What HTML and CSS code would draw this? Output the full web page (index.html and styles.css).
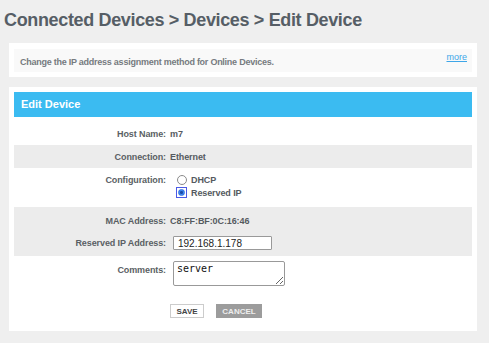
FILE: index.html
```html
<!DOCTYPE html>
<html lang="en">
<head>
    <meta charset="UTF-8">
    <link rel="stylesheet" href="styles.css">
</head>
<body>
    <h1 class="title">Connected Devices &gt; Devices &gt; Edit Device</h1>

    <div class="card">
        <div class="note">
            <span class="note-text">Change the IP address assignment method for Online Devices.</span>
            <a class="more" href="#">more</a>
        </div>
    </div>

    <div class="card main">
        <div class="head">Edit Device</div>

        <div class="row host">
            <div class="lbl">Host Name:</div>
            <div class="val">m7</div>
        </div>
        <div class="row conn grey">
            <div class="lbl">Connection:</div>
            <div class="val">Ethernet</div>
        </div>
        <div class="row conf">
            <div class="lbl">Configuration:</div>
            <div class="val">
                <label class="opt"><span class="ring"><input type="radio" name="cfg" class="rad"></span> DHCP</label>
                <label class="opt"><span class="ring focus"><input type="radio" name="cfg" class="rad" checked></span> Reserved IP</label>
            </div>
        </div>
        <div class="grey block">
            <div class="row mac">
                <div class="lbl">MAC Address:</div>
                <div class="val">C8:FF:BF:0C:16:46</div>
            </div>
            <div class="row ip">
                <div class="lbl">Reserved IP Address:</div>
                <div class="val"><input class="txt" type="text" value="192.168.1.178"></div>
            </div>
        </div>
        <div class="row cmt">
            <div class="lbl">Comments:</div>
            <div class="val"><textarea class="area">server</textarea></div>
        </div>
        <div class="btns">
            <button class="btn save">SAVE</button>
            <button class="btn cancel">CANCEL</button>
        </div>
    </div>
</body>
</html>
```

FILE: styles.css
```css
body{
    margin: 0;
    background: #efefef;
    font-family: "Liberation Sans", Arial, sans-serif;
    color: #555;
}
.title{
    margin: 8px 0 0 4px;
    height: 35px;
    font-size: 18px;
    letter-spacing: -0.35px;
    line-height: 24px;
    color: #565e66;
}
.card{
    background: #fff;
    margin: 0 12px 0 9px;
    padding: 6px 5px 5px 5px;
}
.note{
    background: #f9f9f9;
    height: 23px;
    display: flex;
    align-items: center;
    justify-content: space-between;
    padding: 0 5px 0 6px;
}
.note-text{
    font-size: 9px;
    letter-spacing: -0.25px;
    font-weight: bold;
    color: #767b80;
    padding-top: 3px;
}
.more{
    font-size: 9px;
    color: #3ea6e8;
    align-self: flex-start;
    margin-top: 3px;
}
.main{
    margin-top: 10px;
    padding: 5px 5px 13px 5px;
}
.head{
    background: #3bbbf1;
    color: #fff;
    font-weight: bold;
    font-size: 11px;
    height: 25px;
    line-height: 25px;
    padding-left: 7px;
}
.row{
    display: flex;
    align-items: center;
    box-sizing: border-box;
    font-size: 9px;
    letter-spacing: -0.1px;
    font-weight: bold;
}
.grey{
    background: #ececec;
}
.lbl{
    width: 152px;
    text-align: right;
    color: #5a5f64;
}
.val{
    margin-left: 4px;
    color: #555a5f;
}
.host{
    height: 28px;
    padding-top: 6px;
}
.conn{
    height: 23px;
}
.conf{
    height: 39px;
    align-items: flex-start;
    padding-top: 5px;
}
.conf .lbl{
    padding-top: 2px;
}
.opt{
    display: flex;
    align-items: center;
    height: 13px;
}
.ring{
    display: flex;
    align-items: center;
    justify-content: center;
    width: 11px;
    height: 11px;
    margin: 0 4px 0 6px;
    box-sizing: border-box;
}
.ring.focus{
    border: 1.5px solid #4b5ae6;
}
.rad{
    appearance: none;
    width: 10px;
    height: 10px;
    margin: 0;
    border: 1px solid #8a8a8a;
    border-radius: 50%;
    background: #fff;
    box-sizing: border-box;
}
.rad:checked{
    width: 7px;
    height: 7px;
    border: 1px solid #2f6fe0;
    background: radial-gradient(circle, #1b4aa8 0 1.2px, #3d8af0 1.8px);
}
.block{
    padding-bottom: 4px;
}
.mac{
    height: 27px;
}
.ip{
    height: 18px;
}
.txt{
    margin-left: 3px;
    width: 99px;
    height: 14px;
    box-sizing: border-box;
    border: 1px solid #999;
    border-radius: 1px;
    padding: 0 4px;
    font-family: "Liberation Sans", Arial, sans-serif;
    font-size: 10px;
    color: #222;
}
.cmt{
    align-items: flex-start;
    padding-top: 5px;
}
.cmt .lbl{
    padding-top: 4px;
}
.area{
    margin: 0 0 0 3px;
    width: 112px;
    height: 25px;
    box-sizing: border-box;
    border: 1px solid #999;
    border-radius: 2px;
    padding: 1px 3px;
    font-family: "DejaVu Sans Mono", monospace;
    font-size: 10px;
    color: #111;
    display: block;
}
.btns{
    display: flex;
    gap: 12px;
    padding: 18px 0 0 156px;
}
.btn{
    height: 14px;
    padding: 0;
    font-family: "Liberation Sans", Arial, sans-serif;
    font-size: 8px;
    font-weight: bold;
    border-radius: 0;
}
.save{
    width: 34px;
    background: #fff;
    border: 1px solid #ccc;
    color: #444;
}
.cancel{
    width: 46px;
    background: #9c9c9c;
    border: 1px solid #9c9c9c;
    color: #eee;
}
```
